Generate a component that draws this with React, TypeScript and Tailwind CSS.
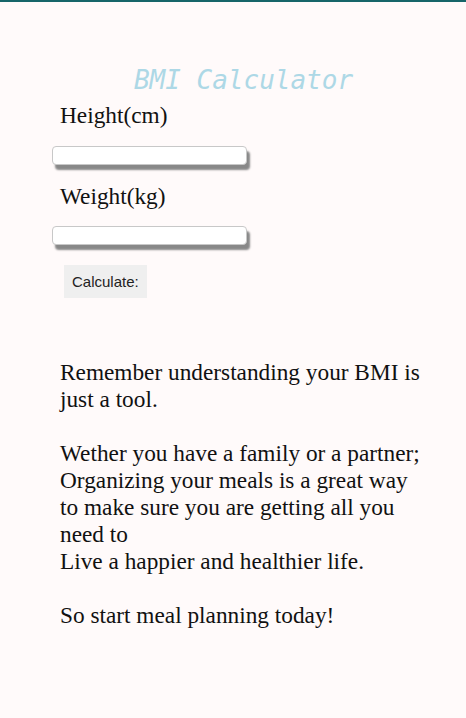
import { useState } from 'react'

function App() {
  const [height, setHeight] = useState('')
  const [weight, setWeight] = useState('')

  return (
    <div className="min-h-screen border-t-2 border-[#176569] bg-[#fffafa] font-['Liberation_Serif',serif] text-[#111]">
      <h1 className="mt-[63px] pl-[21px] text-center font-['DejaVu_Sans_Mono',monospace] text-[26px] italic leading-[30px] text-[#add8e6]">
        BMI Calculator
      </h1>

      <form className="flex flex-col items-start" onSubmit={(event) => event.preventDefault()}>
        <label htmlFor="height" className="ml-[60px] mt-[7px] text-[23.3px] leading-[26.8px]">
          Height(cm)
        </label>
        <input
          id="height"
          value={height}
          onChange={(event) => setHeight(event.target.value)}
          className="ml-[52px] mt-[17px] h-[19px] w-[195px] rounded-[4px] border border-[#c8c8c8] bg-white shadow-[3px_5px_2px_#888] outline-none"
        />

        <label htmlFor="weight" className="ml-[60px] mt-[18px] text-[23.3px] leading-[26.8px]">
          Weight(kg)
        </label>
        <input
          id="weight"
          value={weight}
          onChange={(event) => setWeight(event.target.value)}
          className="ml-[52px] mt-[16px] h-[19px] w-[195px] rounded-[4px] border border-[#c8c8c8] bg-white shadow-[3px_5px_2px_#888] outline-none"
        />

        <button
          type="submit"
          className="ml-[64px] mt-[20px] bg-[#efefef] px-2 py-2 font-['Liberation_Sans',Arial,sans-serif] text-[15px] leading-[17px] text-[#222]"
        >
          Calculate:
        </button>
      </form>

      <p className="ml-[60px] mt-[61px] w-[368px] text-[23.3px] leading-[27.1px]">
        Remember understanding your BMI is just a tool.
        <br />
        <br />
        Wether you have a family or a partner; Organizing your meals is a great way to make sure you are getting all you need to
        <br />
        Live a happier and healthier life.
        <br />
        <br />
        So start meal planning today!
      </p>
    </div>
  )
}

export default App
